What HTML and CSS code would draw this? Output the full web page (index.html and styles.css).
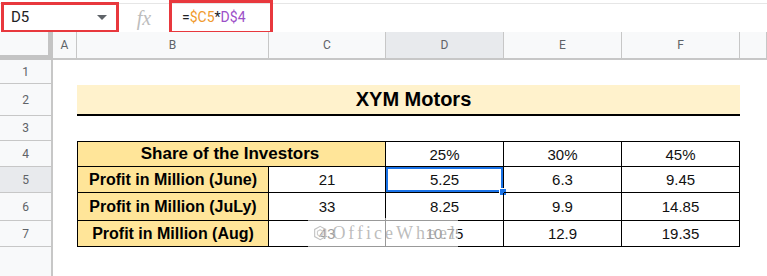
FILE: index.html
```html
<!DOCTYPE html>
<html lang="en">
<head>
    <meta charset="UTF-8">
    <meta name="viewport" content="width=device-width, initial-scale=1.0">
    <title>XYM Motors</title>
    <link rel="stylesheet" href="styles.css">
</head>
<body>
    <div class="toolbar">
        <div class="name-box">
            <span class="cell-ref">D5</span>
            <span class="caret"></span>
        </div>
        <div class="fx">fx</div>
        <div class="formula">=<span class="ref-c">$C5</span>*<span class="ref-d">D$4</span></div>
    </div>

    <div class="sheet">
        <div class="row head-row">
            <div class="corner"></div>
            <div class="col-head">A</div>
            <div class="col-head">B</div>
            <div class="col-head">C</div>
            <div class="col-head active">D</div>
            <div class="col-head">E</div>
            <div class="col-head">F</div>
            <div class="col-head"></div>
        </div>

        <div class="row r1">
            <div class="row-head">1</div>
        </div>

        <div class="row r2">
            <div class="row-head">2</div>
            <div class="blank"></div>
            <div class="title">XYM Motors</div>
        </div>

        <div class="row r3">
            <div class="row-head">3</div>
        </div>

        <div class="row r4">
            <div class="row-head">4</div>
            <div class="blank"></div>
            <div class="cell label first top span-2">Share of the Investors</div>
            <div class="cell top">25%</div>
            <div class="cell top">30%</div>
            <div class="cell top">45%</div>
        </div>

        <div class="row r5">
            <div class="row-head active">5</div>
            <div class="blank"></div>
            <div class="cell label first">Profit in Million (June)</div>
            <div class="cell">21</div>
            <div class="cell selected">5.25</div>
            <div class="cell">6.3</div>
            <div class="cell">9.45</div>
        </div>

        <div class="row r6">
            <div class="row-head">6</div>
            <div class="blank"></div>
            <div class="cell label first">Profit in Million (JuLy)</div>
            <div class="cell">33</div>
            <div class="cell">8.25</div>
            <div class="cell">9.9</div>
            <div class="cell">14.85</div>
        </div>

        <div class="row r7">
            <div class="row-head">7</div>
            <div class="blank"></div>
            <div class="cell label first">Profit in Million (Aug)</div>
            <div class="cell">43</div>
            <div class="cell">10.75</div>
            <div class="cell">12.9</div>
            <div class="cell">19.35</div>
        </div>

        <div class="row r8">
            <div class="row-head"></div>
        </div>

        <!-- site watermark sitting over the table -->
        <div class="watermark">
            <svg class="wm-logo" width="26" height="28" viewBox="0 0 26 28">
                <path d="M13 2 L23 7.5 L23 20.5 L13 26 L3 20.5 L3 7.5 Z" fill="none" stroke="#c2c2c2" stroke-width="2"/>
                <path d="M13 8 L18 11 L18 17 L13 20 L8 17 L8 11 Z" fill="none" stroke="#cccccc" stroke-width="2"/>
            </svg>
            <span class="wm-text">OfficeWheel</span>
        </div>
    </div>
</body>
</html>
```

FILE: styles.css
```css
body {
    margin: 0;
    padding: 0;
    background-color: #fff;
    font-family: 'Liberation Sans', Arial, sans-serif;
    color: #000;
    width: 767px;
    height: 276px;
    overflow: hidden;
}

/* formula bar */

.toolbar {
    display: flex;
    align-items: center;
    border-top: 1px solid #e6e6e6;
    box-sizing: border-box;
    margin-top: 3px;
    height: 29px;
    font-family: Roboto, 'Liberation Sans', sans-serif;
}

.name-box {
    width: 118px;
    height: 31px;
    margin-left: 1px;
    margin-top: -2px;
    border: 3px solid #e8383d;
    box-sizing: border-box;
    display: flex;
    align-items: center;
    justify-content: space-between;
    padding: 0 9px 0 7px;
}

.cell-ref {
    font-size: 15px;
    color: #202124;
}

.caret {
    width: 0;
    height: 0;
    border-left: 5px solid transparent;
    border-right: 5px solid transparent;
    border-top: 5px solid #5f6368;
}

.fx {
    width: 50px;
    text-align: center;
    font-family: 'Liberation Serif', serif;
    font-style: italic;
    font-size: 20px;
    color: #bdbdbd;
}

.formula {
    width: 104px;
    height: 34px;
    margin-top: -2px;
    border: 3px solid #e8383d;
    box-sizing: border-box;
    display: flex;
    align-items: center;
    padding-left: 10px;
    font-size: 14px;
    color: #202124;
}

.ref-c {
    color: #f09a2d;
}

.ref-d {
    color: #9c4fc8;
}

/* grid */

.sheet {
    position: relative;
}

.row {
    display: grid;
    grid-template-columns: 53px 24px 192px 117px 118px 118px 118px 1fr;
}

.head-row { height: 28px; }
.r1 { height: 24px; }
.r2 { height: 32px; }
.r3 { height: 25px; }
.r4 { height: 26px; }
.r5 { height: 26px; }
.r6 { height: 28px; }
.r7 { height: 26px; }
.r8 { height: 29px; }

.corner {
    background-color: #f8f9fa;
    border-right: 5px solid #c4c4c4;
    border-bottom: 5px solid #c4c4c4;
    box-sizing: border-box;
}

.col-head {
    background-color: #f8f9fa;
    border-right: 1px solid #c7c7c7;
    border-bottom: 2px solid #c7c7c7;
    box-sizing: border-box;
    display: flex;
    align-items: center;
    justify-content: center;
    font-family: Roboto, 'Liberation Sans', sans-serif;
    font-size: 12px;
    color: #5f6368;
}

.col-head.active {
    background-color: #e8eaed;
}

.row-head {
    background-color: #f8f9fa;
    border-right: 2px solid #c7c7c7;
    border-bottom: 1px solid #c7c7c7;
    box-sizing: border-box;
    display: flex;
    align-items: center;
    justify-content: center;
    font-family: Roboto, 'Liberation Sans', sans-serif;
    font-size: 12px;
    color: #5f6368;
}

.r8 .row-head {
    border-bottom: none;
}

.row-head.active {
    background-color: #e8eaed;
}

.title {
    grid-column: span 5;
    background-color: #fff2cc;
    border-bottom: 2px solid #000;
    margin-top: 1px;
    box-sizing: border-box;
    display: flex;
    align-items: center;
    justify-content: center;
    font-weight: bold;
    font-size: 20px;
    padding-left: 10px;
}

/* table */

.cell {
    border-right: 1px solid #000;
    border-bottom: 1px solid #000;
    box-sizing: border-box;
    display: flex;
    align-items: center;
    justify-content: center;
    font-size: 15px;
    color: #111;
    position: relative;
}

.cell.first {
    border-left: 1px solid #000;
}

.cell.top {
    border-top: 1px solid #000;
}

.cell.label {
    background-color: #ffe599;
    font-weight: bold;
    font-size: 16px;
    color: #000;
}

.span-2 {
    grid-column: span 2;
}

.cell.label.span-2 {
    font-size: 17px;
    padding-right: 3px;
}

.cell.selected {
    box-shadow: inset 0 0 0 2px #1a73e8;
}

.cell.selected::after {
    content: "";
    position: absolute;
    right: -4px;
    bottom: -4px;
    width: 6px;
    height: 6px;
    background-color: #1a73e8;
    border: 1px solid #fff;
}

/* watermark */

.watermark {
    position: absolute;
    left: 308px;
    top: 186px;
    width: 150px;
    height: 30px;
    background-color: rgba(255, 255, 255, 0.6);
    display: flex;
    align-items: center;
    gap: 5px;
    padding-left: 5px;
    box-sizing: border-box;
}

.wm-text {
    font-family: 'Liberation Serif', serif;
    font-size: 18px;
    letter-spacing: 3px;
    color: rgba(160, 160, 160, 0.7);
}
```
